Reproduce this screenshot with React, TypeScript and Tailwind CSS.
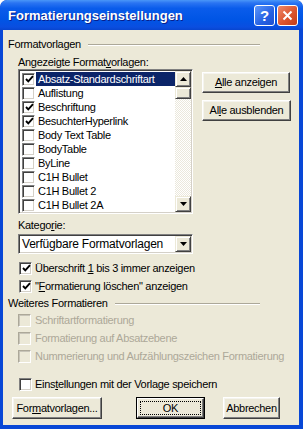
import React from "react";

const font = { fontFamily: '"Liberation Sans", Arial, sans-serif' };

function Check({ checked = false, disabled = false }: { checked?: boolean; disabled?: boolean }) {
  return (
    <div
      className={
        "w-[13px] h-[13px] shrink-0 border flex items-center justify-center " +
        (disabled
          ? "bg-[#ece9d8] border-t-[#aca899] border-l-[#aca899] border-r-white border-b-white shadow-[inset_1px_1px_0_#c7c4b8]"
          : "bg-white border-t-[#808080] border-l-[#808080] border-r-white border-b-white shadow-[inset_1px_1px_0_#404040,inset_-1px_-1px_0_#d4d0c8]")
      }
    >
      {checked && (
        <svg width="9" height="9" viewBox="0 0 9 9" className="ml-[1px]">
          <path d="M1 4 L3.3 6.4 L8 1.2" stroke="#000" strokeWidth="1.9" fill="none" />
        </svg>
      )}
    </div>
  );
}

function Btn({
  children,
  className = "",
  def = false,
}: {
  children: React.ReactNode;
  className?: string;
  def?: boolean;
}) {
  if (def) {
    return (
      <div className={"border border-black bg-[#ece9d8] " + className}>
        <div className="h-full border border-t-white border-l-white border-r-[#404040] border-b-[#404040] shadow-[inset_-1px_-1px_0_#808080] p-[2px]">
          <div className="h-full border border-dotted border-black flex items-center justify-center">
            {children}
          </div>
        </div>
      </div>
    );
  }
  return (
    <div
      className={
        "bg-[#ece9d8] border border-t-white border-l-white border-r-[#404040] border-b-[#404040] shadow-[inset_-1px_-1px_0_#808080,inset_1px_1px_0_#f5f4ef] flex items-center justify-center " +
        className
      }
    >
      {children}
    </div>
  );
}

function Arrow({ up = false }: { up?: boolean }) {
  return (
    <svg width="7" height="4" viewBox="0 0 7 4">
      {up ? <path d="M3.5 0 L7 4 L0 4 Z" fill="#000" /> : <path d="M0 0 L7 0 L3.5 4 Z" fill="#000" />}
    </svg>
  );
}

function ScrollBtn({ up = false }: { up?: boolean }) {
  return (
    <div className="w-[16px] h-[16px] bg-[#ece9d8] border border-t-[#ece9d8] border-l-[#ece9d8] border-r-[#404040] border-b-[#404040] shadow-[inset_1px_1px_0_#fff,inset_-1px_-1px_0_#808080] flex items-center justify-center">
      <Arrow up={up} />
    </div>
  );
}

function GroupHeader({ label }: { label: string }) {
  return (
    <div className="flex items-center h-[13px] pl-[5px] w-[257px]">
      <span className="whitespace-nowrap">{label}</span>
      <div className="flex-1 ml-[7px] flex flex-col">
        <div className="h-px bg-[#aca899]" />
        <div className="h-px bg-white" />
      </div>
    </div>
  );
}

const items: [string, boolean][] = [
  ["Absatz-Standardschriftart", true],
  ["Auflistung", false],
  ["Beschriftung", true],
  ["BesuchterHyperlink", true],
  ["Body Text Table", false],
  ["BodyTable", false],
  ["ByLine", false],
  ["C1H Bullet", false],
  ["C1H Bullet 2", false],
  ["C1H Bullet 2A", false],
];

export default function App() {
  return (
    <div
      className="w-[303px] h-[429px] bg-[#0847d6] rounded-t-[7px] flex flex-col text-[11px] text-black tracking-[-0.3px] leading-[13px] overflow-hidden"
      style={font}
    >
      {/* title bar */}
      <div className="h-[30px] shrink-0 rounded-t-[7px] bg-[linear-gradient(to_bottom,#4a97f8_0%,#2a74f2_10%,#0a5ceb_28%,#0055e5_65%,#0a4ee0_90%,#0845cf_100%)] flex items-center pl-[8px] pr-[5px]">
        <span
          className="flex-1 text-white font-bold text-[13px] tracking-normal [text-shadow:1px_1px_0_#0a1e8a]"
          style={font}
        >
          Formatierungseinstellungen
        </span>
        <div className="w-[21px] h-[21px] rounded-[3px] border border-white bg-[linear-gradient(to_bottom_right,#5d97fa,#2561e3_60%,#1e4fd0)] flex items-center justify-center text-white font-bold text-[15px] tracking-normal">
          ?
        </div>
        <div className="w-[21px] h-[21px] ml-[2px] rounded-[3px] border border-white bg-[linear-gradient(to_bottom_right,#ee8a6c,#dc552f_55%,#c43d17)] flex items-center justify-center">
          <svg width="11" height="11" viewBox="0 0 11 11">
            <path d="M1.5 1.5 L9.5 9.5 M9.5 1.5 L1.5 9.5" stroke="#fff" strokeWidth="2" />
          </svg>
        </div>
      </div>

      {/* body */}
      <div className="flex-1 ml-[3px] mr-[4px] mb-[4px] bg-[#ece9d8] flex flex-col pt-[8px]">
        <GroupHeader label="Formatvorlagen" />
        <div className="mt-[5px] pl-[15px] h-[13px]">
          Angezeigte Format<u>v</u>orlagen:
        </div>
        <div className="flex pl-[15px]">
          {/* list */}
          <div className="w-[175px] h-[145px] border border-t-[#808080] border-l-[#808080] border-r-white border-b-white shadow-[inset_1px_1px_0_#404040,inset_-1px_-1px_0_#d4d0c8] p-[1px] flex">
            <div className="flex-1 bg-white flex flex-col pt-[1px]">
              {items.map(([name, checked], i) => (
                <div key={name} className="h-[14px] flex items-center pl-[2px]">
                  <Check checked={checked} />
                  <div
                    className={
                      "flex-1 h-[14px] flex items-center pl-[2px] ml-[1px] whitespace-nowrap " +
                      (i === 0 ? "bg-[#0b2468] text-white" : "")
                    }
                  >
                    {name}
                  </div>
                </div>
              ))}
            </div>
            <div className="w-[16px] flex flex-col">
              <ScrollBtn up />
              <div className="flex-1 bg-[#f4f3ee] bg-[image:repeating-conic-gradient(#ffffff_0%_25%,#ebe8dc_0%_50%)] bg-[length:2px_2px] flex flex-col">
                <div className="h-[12px] bg-[#ece9d8] border border-t-[#ece9d8] border-l-[#ece9d8] border-r-[#404040] border-b-[#404040] shadow-[inset_1px_1px_0_#fff,inset_-1px_-1px_0_#808080]" />
              </div>
              <ScrollBtn />
            </div>
          </div>
          {/* right buttons */}
          <div className="ml-[9px] pt-[3px] flex flex-col gap-[7px]">
            <Btn className="w-[88px] h-[21px]">
              <span>
                <u>A</u>lle anzeigen
              </span>
            </Btn>
            <Btn className="w-[89px] h-[21px]">
              <span>
                Al<u>l</u>e ausblenden
              </span>
            </Btn>
          </div>
        </div>

        <div className="mt-[5px] pl-[15px] h-[13px]">
          Katego<u>r</u>ie:
        </div>
        <div className="mt-[2px] ml-[15px] w-[175px] h-[20px] border border-t-[#808080] border-l-[#808080] border-r-white border-b-white shadow-[inset_1px_1px_0_#404040,inset_-1px_-1px_0_#d4d0c8] p-[1px] flex">
          <div className="flex-1 bg-white flex items-center pl-[2px] whitespace-nowrap text-[12px] tracking-[-0.2px]">
            Verfügbare Formatvorlagen
          </div>
          <div className="w-[16px] h-[16px]">
            <ScrollBtn />
          </div>
        </div>

        <div className="mt-[5px] h-[18px] flex items-center pl-[16px] gap-[3px]">
          <Check checked />
          <span className="whitespace-nowrap">
            Überschrift <u>1</u> bis 3 immer anzeigen
          </span>
        </div>
        <div className="h-[18px] flex items-center pl-[16px] gap-[3px]">
          <Check checked />
          <span className="whitespace-nowrap">
            "<u>F</u>ormatierung löschen" anzeigen
          </span>
        </div>

        <div className="mt-[2px]">
          <GroupHeader label="Weiteres Formatieren" />
        </div>
        <div className="mt-[1px] text-[#aca899]">
          <div className="h-[18px] flex items-center pl-[15px] gap-[4px]">
            <Check disabled />
            <span className="whitespace-nowrap">Schriftartformatierung</span>
          </div>
          <div className="h-[18px] flex items-center pl-[15px] gap-[4px]">
            <Check disabled />
            <span className="whitespace-nowrap">Formatierung auf Absatzebene</span>
          </div>
          <div className="h-[18px] flex items-center pl-[15px] gap-[4px]">
            <Check disabled />
            <span className="whitespace-nowrap">Nummerierung und Aufzählungszeichen Formatierung</span>
          </div>
        </div>

        <div className="mt-[10px] h-[18px] flex items-center pl-[16px] gap-[3px]">
          <Check />
          <span className="whitespace-nowrap">
            Eins<u>t</u>ellungen mit der Vorlage speichern
          </span>
        </div>

        <div className="mt-[4px] flex items-start pl-[9px]">
          <Btn className="w-[90px] h-[22px]">
            <span>
              For<u>m</u>atvorlagen...
            </span>
          </Btn>
          <Btn def className="ml-[34px] w-[69px] h-[22px]">
            <span>OK</span>
          </Btn>
          <Btn className="ml-[18px] w-[57px] h-[22px]">
            <span>Abbrechen</span>
          </Btn>
        </div>
      </div>
    </div>
  );
}
